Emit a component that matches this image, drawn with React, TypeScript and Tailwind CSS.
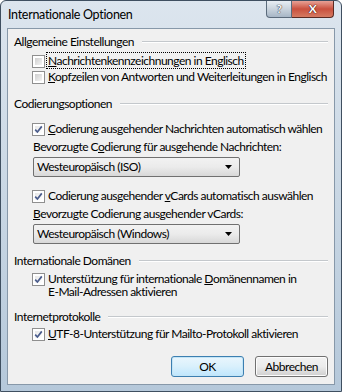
import React from "react";

const font = { fontFamily: 'Lato, "Noto Sans", sans-serif' };

function Check({ checked }: { checked?: boolean }) {
  return (
    <div className="w-[13px] h-[13px] shrink-0 border border-[#8f8f8f] bg-white p-[2px]">
      <div
        className={
          checked
            ? "w-full h-full bg-gradient-to-br from-[#e6e6e6] to-[#ffffff] relative"
            : "w-full h-full bg-gradient-to-br from-[#cfcfcf] to-[#f4f4f4]"
        }
      >
        {checked && (
          <svg className="absolute left-[-2px] top-[-2px]" width="11" height="11" viewBox="0 0 11 11">
            <path d="M2.2 5.6 L4.4 8 L8.8 2.4" fill="none" stroke="#4a5c8c" strokeWidth="1.7" />
          </svg>
        )}
      </div>
    </div>
  );
}

function Header({ text, className = "" }: { text: string; className?: string }) {
  return (
    <div className={"flex items-center h-4 ml-[6px] mr-[6px] " + className}>
      <span className="whitespace-nowrap">{text}</span>
      <div className="flex-1 ml-[8px] h-[2px] border-t border-[#c4c8cc] border-b-white border-b" />
    </div>
  );
}

function CB({ checked, children, className = "" }: { checked?: boolean; children: React.ReactNode; className?: string }) {
  return (
    <div className={"flex items-start ml-[24px] " + className}>
      <div className="h-4 flex items-center">
        <Check checked={checked} />
      </div>
      <div className="ml-[3px] leading-4 whitespace-nowrap">{children}</div>
    </div>
  );
}

function Combo({ text, className = "" }: { text: string; className?: string }) {
  return (
    <div
      className={
        "ml-[25px] w-[207px] h-[20px] rounded-[2px] border border-[#707070] bg-gradient-to-b from-[#f2f2f2] via-[#ebebeb] to-[#d8d8d8] flex items-center justify-between pl-[3px] pr-[7px] " +
        className
      }
    >
      <span className="leading-4">{text}</span>
      <svg width="7" height="4" viewBox="0 0 7 4">
        <path d="M0 0 H7 L3.5 4 Z" fill="#000" />
      </svg>
    </div>
  );
}

export default function App() {
  return (
    <div
      className="w-[342px] h-[392px] relative overflow-hidden rounded-t-[6px] border border-[#3f4f60] bg-gradient-to-b from-[#dce5ee] via-[#c9d7e4] to-[#b5c8da] text-[12px] tracking-[-0.5px] text-black flex flex-col"
      style={font}
    >
      <div className="h-[27px] flex items-start justify-between shrink-0">
        <div className="pl-[7px] pt-[6px] text-[12.5px] tracking-[-0.3px] leading-4 text-black">Internationale Optionen</div>
        <div className="flex mr-[7px]">
          <div className="w-[26px] h-[17px] rounded-bl-[4px] border border-[#5b6b7c] border-t-0 bg-gradient-to-b from-[#e8eef4] via-[#c9d3dd] to-[#a7b6c6] flex items-center justify-center text-white font-bold text-[12px] leading-none [text-shadow:0_0_1px_#223,0_0_1px_#223]">
            ?
          </div>
          <div className="w-[42px] h-[17px] rounded-br-[4px] border border-[#5a2a22] border-t-0 border-l-0 bg-gradient-to-b from-[#e7a196] via-[#c9503e] to-[#d57a62] flex items-center justify-center text-white font-bold text-[12px] leading-none [text-shadow:0_0_1px_#300,0_0_1px_#300]">
            X
          </div>
        </div>
      </div>
      <div className="mx-[6px] h-[357px] border border-[#8798a9] bg-[#f0f0f0] flex flex-col shrink-0">
        <Header text="Allgemeine Einstellungen" className="mt-[5px]" />
        <CB className="mt-[3px]">
          <span className="outline outline-1 outline-dotted outline-black px-[1px] -ml-[1px]">
            <span className="underline">N</span>achrichtenkennzeichnungen in Englisch
          </span>
        </CB>
        <CB>
          <span className="underline">K</span>opfzeilen von Antworten und Weiterleitungen in Englisch
        </CB>
        <Header text="Codierungsoptionen" className="mt-[11px]" />
        <CB checked className="mt-[9px]">
          <span className="underline">C</span>odierung ausgehender Nachrichten automatisch wählen
        </CB>
        <div className="ml-[25px] mt-[2px] h-4 leading-4 whitespace-nowrap">
          Bevorzugte C<span className="underline">o</span>dierung für ausgehende Nachrichten:
        </div>
        <Combo text="Westeuropäisch (ISO)" className="mt-[2px]" />
        <CB checked className="mt-[11px]">
          Codierung ausgehender <span className="underline">v</span>Cards automatisch auswählen
        </CB>
        <div className="ml-[25px] mt-[2px] h-4 leading-4 whitespace-nowrap">
          <span className="underline">B</span>evorzugte Codierung ausgehender vCards:
        </div>
        <Combo text="Westeuropäisch (Windows)" className="mt-[2px]" />
        <Header text="Internationale Domänen" className="mt-[9px]" />
        <CB checked className="mt-[2px]">
          <div className="leading-[13px] pt-[1px]">
            Unterstützung für internationale <span className="underline">D</span>omänennamen in
            <br />
            E-Mail-Adressen aktivieren
          </div>
        </CB>
        <Header text="Internetprotokolle" className="mt-[11px]" />
        <CB checked className="mt-[1px]">
          <span className="underline">U</span>TF-8-Unterstützung für Mailto-Protokoll aktivieren
        </CB>
        <div className="flex justify-end gap-[11px] mr-[6px] mt-[14px]">
          <div className="w-[73px] h-[21px] rounded-[3px] border border-[#3c7fb1] bg-gradient-to-b from-[#eaf6fd] via-[#d9f0fc] to-[#bee6fd] flex items-center justify-center shadow-[inset_0_0_0_1px_#c4e5f6]">
            OK
          </div>
          <div className="w-[73px] h-[21px] rounded-[3px] border border-[#707070] bg-gradient-to-b from-[#f2f2f2] via-[#ebebeb] to-[#cfcfcf] flex items-center justify-center shadow-[inset_0_0_0_1px_#fcfcfc]">
            Abbrechen
          </div>
        </div>
      </div>
    </div>
  );
}
